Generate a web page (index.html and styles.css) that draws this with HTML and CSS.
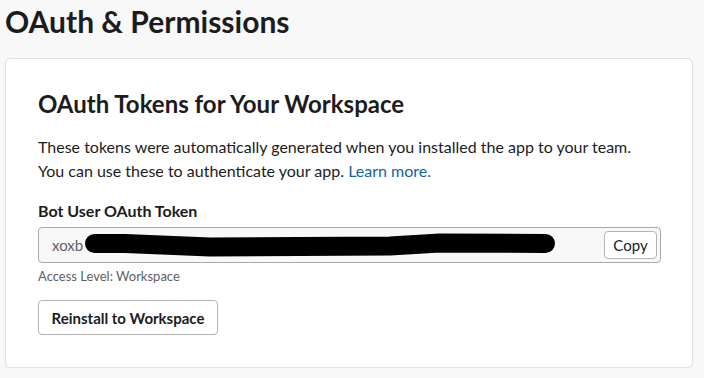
FILE: index.html
```
<!DOCTYPE html>
<html lang="en">
<head>
<meta charset="utf-8">
<title>OAuth &amp; Permissions</title>
<link rel="stylesheet" href="styles.css">
</head>
<body>
<main class="page">
  <h1 class="page-title">OAuth &amp; Permissions</h1>
  <section class="card">
    <h2 class="card-title">OAuth Tokens for Your Workspace</h2>
    <p class="card-text">These tokens were automatically generated when you installed the app to your team. You can use these to authenticate your app. <a class="link" href="#">Learn more.</a></p>
    <div class="field-label">Bot User OAuth Token</div>
    <div class="token-box">
      <span class="token-text">xoxb</span>
      <svg class="redact" width="480" height="30" viewBox="0 0 480 30" aria-hidden="true">
        <path d="M9.5 12.5 L40 12.5 L125 16 L305 15 L355 12 L460.5 12.5" fill="none" stroke="#000" stroke-width="19" stroke-linecap="round" stroke-linejoin="round"/>
      </svg>
      <button class="btn btn-small">Copy</button>
    </div>
    <div class="hint">Access Level: Workspace</div>
    <button class="btn btn-large">Reinstall to Workspace</button>
  </section>
</main>
</body>
</html>
```
FILE: styles.css
```
* { box-sizing: border-box; }
html, body { margin: 0; padding: 0; }
body {
  background: #f8f8f8;
  font-family: Lato, "Noto Sans", sans-serif;
  color: #1d1c1d;
}
.page {
  padding: 1px 11px 0 5px;
}
.page-title {
  margin: 0 0 17px 0;
  font-size: 30px;
  font-weight: 700;
  line-height: 40px;
}
.card {
  background: #fff;
  border: 1px solid #e2e2e2;
  border-radius: 6px;
  box-shadow: 0 1px 2px rgba(0,0,0,0.06);
  padding: 31px 31px 32px 32px;
}
.card-title {
  margin: 0 0 17px 0;
  font-size: 24px;
  font-weight: 700;
  line-height: 28px;
}
.card-text {
  margin: 0 0 16px 0;
  max-width: 600px;
  font-size: 16px;
  line-height: 24px;
}
.link { color: #1264a3; text-decoration: none; }
.field-label {
  font-size: 16px;
  font-weight: 700;
  line-height: 24px;
  margin-bottom: 4px;
}
.token-box {
  position: relative;
  display: flex;
  align-items: center;
  height: 36px;
  border: 1px solid #a8a8a8;
  border-radius: 4px;
  background: #f8f8f8;
  padding: 0 3px 0 13px;
}
.token-text {
  flex: 1;
  font-size: 15px;
  color: #616061;
}
.redact {
  position: absolute;
  left: 46px;
  top: 3px;
}
.btn {
  font-family: inherit;
  background: #fff;
  color: #1d1c1d;
  border: 1px solid #b4b4b4;
  border-radius: 4px;
  cursor: pointer;
}
.btn-small {
  width: 53px;
  height: 28px;
  font-size: 15px;
  padding: 0;
}
.hint {
  margin-top: 4px;
  font-size: 13px;
  line-height: 18px;
  color: #616061;
}
.btn-large {
  display: block;
  margin-top: 15px;
  width: 180px;
  height: 35px;
  font-size: 15px;
  font-weight: 700;
  padding: 0;
}
```
